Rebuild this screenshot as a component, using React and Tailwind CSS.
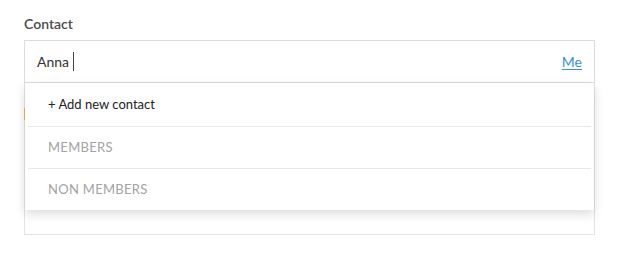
import { useState } from "react";

const groups = ["MEMBERS", "NON MEMBERS"];

function App() {
  const [value, setValue] = useState("Anna");

  return (
    <div className="w-[617px] h-[263px] bg-white pl-[24px] pt-[14px] font-['Lato','Liberation_Sans',sans-serif]">
      <div className="w-[571px]">
        <label className="block text-[14px] leading-[20px] font-semibold text-[#4a4a4a] mb-[6px]">
          Contact
        </label>
        <div className="relative">
          {/* input */}
          <div className="flex items-center justify-between h-[43px] border border-[#dcdcdc] pl-[12px] pr-[12px]">
            <div className="flex items-center">
              <span className="text-[14px] text-[#333]">{value}</span>
              <span className="ml-[4px] w-px h-[19px] bg-[#444]" />
            </div>
            <a
              href="#"
              onClick={(e) => {
                e.preventDefault();
                setValue("Me");
              }}
              className="text-[14px] text-[#3a8fd6] underline underline-offset-2"
            >
              Me
            </a>
          </div>
          {/* field underneath */}
          <div className="h-[152px] border border-t-0 border-[#e3e3e3] pt-[25px]">
            <div className="-ml-px w-[2px] h-[12px] bg-[#f0b35a]" />
          </div>
          {/* dropdown */}
          <div className="absolute top-[43px] left-px right-px bg-white shadow-[0_4px_10px_rgba(0,0,0,0.14)]">
            <div className="h-[43px] flex items-center pl-[23px] text-[13px] text-[#222]">
              + Add new contact
            </div>
            {groups.map((g) => (
              <div key={g} className="mx-[3px] border-t border-[#e8e8e8]">
                <div className="h-[41px] flex items-center pl-[20px] text-[13px] tracking-[0.3px] text-[#a3a3a3]">
                  {g}
                </div>
              </div>
            ))}
          </div>
        </div>
      </div>
    </div>
  );
}

export default App;
